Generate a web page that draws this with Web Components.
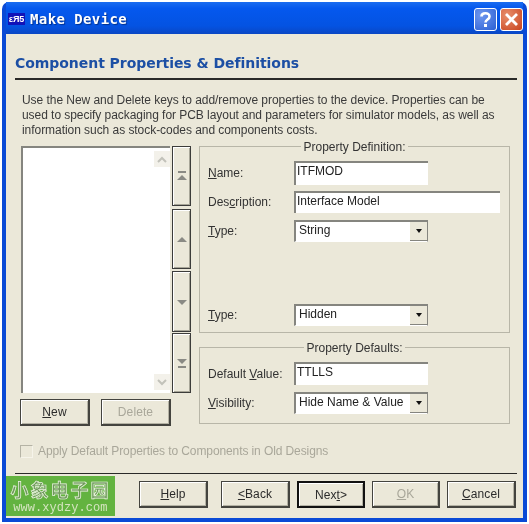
<!DOCTYPE html>
<html>
<head>
<meta charset="utf-8">
<title>Make Device</title>
<style>
	html, body { margin: 0; background: #fff; }
	body { font: 12px "Liberation Sans", Arial, sans-serif; color: #333; }
	u { text-decoration: underline; }
</style>
</head>
<body>

<xp-window heading="Make Device">
	<page-heading>Component Properties &amp; Definitions</page-heading>
	<intro-text>Use the New and Delete keys to add/remove properties to the device. Properties can be used to specify packaging for PCB layout and parameters for simulator models, as well as information such as stock-codes and components costs.</intro-text>

	<main-area>
		<property-list slot="left"></property-list>
		<group-box slot="right" legend="Property Definition:" style="height:187px">
			<form-row style="margin-top:14px"><span slot="label"><u>N</u>ame:</span><text-field value="ITFMOD" style="width:134px;height:24px"></text-field></form-row>
			<form-row style="margin-top:6px"><span slot="label">Des<u>c</u>ription:</span><text-field value="Interface Model" style="width:206px;height:22px"></text-field></form-row>
			<form-row style="margin-top:7px"><span slot="label"><u>T</u>ype:</span><drop-list value="String"></drop-list></form-row>
			<form-row style="margin-top:62px"><span slot="label"><u>T</u>ype:</span><drop-list value="Hidden"></drop-list></form-row>
		</group-box>
		<group-box slot="right" legend="Property Defaults:" style="height:77px;margin-top:14px">
			<form-row style="margin-top:14px"><span slot="label">Default <u>V</u>alue:</span><text-field value="TTLLS" style="width:134px;height:23px"></text-field></form-row>
			<form-row style="margin-top:7px"><span slot="label"><u>V</u>isibility:</span><drop-list value="Hide Name &amp; Value"></drop-list></form-row>
		</group-box>
	</main-area>

	<check-line>Apply Default Properties to Components in Old Designs</check-line>

	<wizard-footer>
		<xp-button style="width:69px;margin-left:24px"><u>H</u>elp</xp-button>
		<xp-button style="width:69px;margin-left:13px"><u>&lt;</u>Back</xp-button>
		<xp-button primary style="width:68px;margin-left:7px">Nex<u>t</u>&gt;</xp-button>
		<xp-button disabled style="width:68px;margin-left:7px"><u>O</u>K</xp-button>
		<xp-button style="width:69px;margin-left:7px"><u>C</u>ancel</xp-button>
	</wizard-footer>
</xp-window>

<script>
	// Small helper: every element below only needs a template string
	class BaseElement extends HTMLElement {
		constructor() {
			super();
			this.attachShadow({ mode: "open" });
		}
		connectedCallback() {
			this.shadowRoot.innerHTML = this.render();
		}
	}

	const upChevron = `<path d="M1 7 L6 2 L11 7 Z" fill="#8a8a84"/>`;
	const downChevron = `<path d="M1 2 L6 7 L11 2 Z" fill="#8a8a84"/>`;

	class XpWindow extends BaseElement {
		render() {
			return `
			<style>
				:host { display: block; width: 525px; height: 520px; margin: 2px; }
				.frame {
					height: 100%; box-sizing: border-box; display: flex; flex-direction: column;
					background: #0a4ad6; border-radius: 7px 7px 0 0;
					padding: 0 4px 4px; filter: blur(.55px);
				}
				.bar {
					height: 32px; flex: none; display: flex; align-items: center;
					background: linear-gradient(#1a6cf0, #0558ee 20%, #0453e2 75%, #0a47c4);
				}
				.logo {
					width: 17px; height: 12px; margin: 2px 0 0 2px; background: #1212b8; color: #fff;
					font: bold 9px/12px "Liberation Sans", sans-serif; text-align: center; overflow: hidden;
				}
				.title {
					margin: 1px 0 0 5px; color: #fff; letter-spacing: .4px;
					font: bold 14px "DejaVu Sans Mono", monospace; text-shadow: 1px 1px 1px #02308c;
				}
				.caps { margin-left: auto; display: flex; gap: 3px; padding-top: 3px; }
				.cap {
					width: 23px; height: 23px; box-sizing: border-box; border: 1px solid #fff; border-radius: 3px;
					display: block;
				}
				.help { background: radial-gradient(circle at 30% 30%, #6f97ee, #2a5fd4); }
				.close { background: radial-gradient(circle at 30% 30%, #e88f6c, #c8431e); }
				.client { flex: 1; min-height: 0; background: #ebe8d9; display: flex; flex-direction: column; }
			</style>
			<div class="frame">
				<div class="bar">
					<div class="logo">&#949;&#1071;5</div>
					<div class="title">${this.getAttribute("heading")}</div>
					<div class="caps">
						<svg class="cap help" viewBox="0 0 21 21"><path d="M6.5 7.5 C6.5 3.5 14.5 3 14.5 7.5 C14.5 10.5 10.5 10.5 10.5 13.5" fill="none" stroke="#fff" stroke-width="2.6"/><rect x="9" y="15" width="3" height="3" fill="#fff"/></svg>
						<svg class="cap close" viewBox="0 0 21 21"><path d="M5 5 L16 16 M16 5 L5 16" stroke="#fff" stroke-width="2.8"/></svg>
					</div>
				</div>
				<div class="client"><slot></slot></div>
			</div>`;
		}
	}

	class PageHeading extends BaseElement {
		render() {
			return `
			<style>
				:host {
					display: block; margin: 20px 6px 0 9px; height: 24px;
					border-bottom: 2px solid #2a2a28; color: #1c4fa4;
					font: bold 14px/19px "DejaVu Sans", sans-serif; letter-spacing: -.05px;
				}
			</style><slot></slot>`;
		}
	}

	class IntroText extends BaseElement {
		render() {
			return `
			<style>
				:host {
					display: block; margin: 13px 20px 0 16px; height: 53px;
					font: 12px/15px "Liberation Sans", sans-serif; color: #3a3a3a; letter-spacing: -.05px;
				}
			</style><slot></slot>`;
		}
	}

	class MainArea extends BaseElement {
		render() {
			return `
			<style>
				:host { display: flex; margin: 0 0 0 14px; height: 280px; }
				.left { width: 179px; flex: none; }
				.right { width: 311px; flex: none; }
			</style>
			<div class="left"><slot name="left"></slot></div>
			<div class="right"><slot name="right"></slot></div>`;
		}
	}

	class PropertyList extends BaseElement {
		render() {
			const arrow = (paths, h, gap) => `<div class="move" style="height:${h}px;margin-bottom:${gap}px"><svg width="12" height="14" viewBox="0 0 12 14">${paths}</svg></div>`;
			return `
			<style>
				:host { display: block; width: 171px; }
				.top { display: flex; gap: 2px; height: 247px; }
				.list {
					width: 149px; box-sizing: border-box; background: #fff; margin-left: 1px;
					border-top: 2px solid #85857f; border-left: 2px solid #85857f;
					display: flex; flex-direction: column; justify-content: space-between;
					align-items: flex-end; padding: 3px 0 3px;
				}
				.sb {
					width: 16px; height: 16px; background: #f3f1ea; display: flex;
					align-items: center; justify-content: center;
				}
				.moves { width: 19px; display: flex; flex-direction: column; }
				.move {
					box-sizing: border-box; background: #ebe8d9;
					border: 1px solid #3c3c3a; box-shadow: inset 1px 1px 0 #fff, inset -1px -1px 0 #a8a698;
					display: flex; align-items: center; justify-content: center;
				}
				.btns { display: flex; margin-top: 6px; gap: 11px; }
				xp-button { width: 70px; }
			</style>
			<div class="top">
				<div class="list">
					<div class="sb"><svg width="12" height="9" viewBox="0 0 12 9"><path d="M2 7 L6 3 L10 7" fill="none" stroke="#c2c2ba" stroke-width="2"/></svg></div>
					<div class="sb"><svg width="12" height="9" viewBox="0 0 12 9"><path d="M2 2 L6 6 L10 2" fill="none" stroke="#c2c2ba" stroke-width="2"/></svg></div>
				</div>
				<div class="moves">
					${arrow(`<rect x="2" y="2" width="8" height="2" fill="#8a8a84"/><g transform="translate(0 4)">${upChevron}</g>`, 60, 3)}
					${arrow(`<g transform="translate(0 3)">${upChevron}</g>`, 60, 2)}
					${arrow(`<g transform="translate(0 3)">${downChevron}</g>`, 61, 1)}
					${arrow(`<g transform="translate(0 1)">${downChevron}</g><rect x="2" y="10" width="8" height="2" fill="#8a8a84"/>`, 60, 0)}
				</div>
			</div>
			<div class="btns">
				<xp-button><u>N</u>ew</xp-button>
				<xp-button disabled>Delete</xp-button>
			</div>`;
		}
	}

	class GroupBox extends BaseElement {
		render() {
			return `
			<style>
				:host { display: block; box-sizing: border-box; border: 1px solid #b8b6a8; position: relative; padding: 0 0 0 8px; }
				.legend {
					position: absolute; top: -7px; left: 0; right: 0; text-align: center;
					font: 12px/14px "Liberation Sans", sans-serif; color: #333;
				}
				.legend span { background: #ebe8d9; padding: 0 2px; }
			</style>
			<div class="legend"><span>${this.getAttribute("legend")}</span></div>
			<slot></slot>`;
		}
	}

	class FormRow extends BaseElement {
		render() {
			return `
			<style>
				:host { display: flex; align-items: center; }
				.label { width: 86px; flex: none; font: 12px "Liberation Sans", sans-serif; color: #333; white-space: nowrap; }
			</style>
			<div class="label"><slot name="label"></slot></div>
			<slot></slot>`;
		}
	}

	class TextField extends BaseElement {
		render() {
			return `
			<style>
				:host {
					display: block; box-sizing: border-box; background: #fff;
					border-top: 2px solid #85857f; border-left: 2px solid #85857f;
					padding-left: 1px; font: 12px/16px "Liberation Sans", sans-serif; color: #222;
				}
			</style>${this.getAttribute("value")}`;
		}
	}

	class DropList extends BaseElement {
		render() {
			return `
			<style>
				:host {
					display: flex; width: 134px; height: 22px; box-sizing: border-box; background: #fff;
					border: 1px solid #85857f; border-bottom-color: #fff; border-right-color: #85857f;
					border-left-width: 2px; border-top-width: 2px;
					font: 12px/16px "Liberation Sans", sans-serif; color: #222;
				}
				.val { flex: 1; padding-left: 3px; white-space: nowrap; overflow: hidden; }
				.arrow {
					width: 17px; height: 19px; background: #ebe8d9; border-bottom: 1px solid #85857f;
					display: flex; align-items: center; justify-content: center; box-sizing: border-box;
				}
				.arrow::after {
					content: ""; border: 3.5px solid transparent; border-top: 4px solid #111; border-bottom: 0;
				}
			</style>
			<div class="val">${this.getAttribute("value")}</div>
			<div class="arrow"></div>`;
		}
	}

	class XpButton extends BaseElement {
		render() {
			const primary = this.hasAttribute("primary");
			const disabled = this.hasAttribute("disabled");
			return `
			<style>
				:host {
					display: flex; align-items: center; justify-content: center; box-sizing: border-box;
					height: 27px; background: #ebe8d9; font: 12px "Liberation Sans", sans-serif;
					color: ${disabled ? "#a9a79a" : "#2b2b2b"}; letter-spacing: .1px;
					border: ${primary ? "2px solid #111" : "1px solid #44443f"};
					border-bottom-width: 2px; border-right-width: 2px;
					box-shadow: inset 1px 1px 0 #fff, inset -1px -1px 0 #b4b2a4;
				}
			</style><slot></slot>`;
		}
	}

	class CheckLine extends BaseElement {
		render() {
			return `
			<style>
				:host {
					display: flex; align-items: center; gap: 5px; margin: 18px 0 0 14px; height: 14px;
					font: 12px "Liberation Sans", sans-serif; color: #a9a79a; letter-spacing: -.1px;
				}
				.box { width: 13px; height: 13px; box-sizing: border-box; border: 1px solid #b5b3a5; border-right-color: #f6f4ea; border-bottom-color: #f6f4ea; }
			</style>
			<div class="box"></div><slot></slot>`;
		}
	}

	class WizardFooter extends BaseElement {
		render() {
			return `
			<style>
				:host { display: block; flex: 1; min-height: 0; margin-top: 15px; }
				.rule { height: 1px; background: #2a2a28; margin: 0 6px 0 9px; }
				.row { display: flex; align-items: flex-start; }
				.mark {
					width: 109px; height: 40px; flex: none; margin-top: 2px; background: #63b340; text-align: center; overflow: hidden;
				}
				.cn {
					font: bold 18px/26px "Noto Sans CJK SC", sans-serif; letter-spacing: 2px;
					color: #6f9a5c; -webkit-text-stroke: .7px #eef4e4; height: 26px;
				}
				.url { font: 12px/12px "Liberation Mono", monospace; color: #d5e4c0; letter-spacing: .05px; }
				.btns { display: flex; padding-top: 7px; }
			</style>
			<div class="rule"></div>
			<div class="row">
				<div class="mark"><div class="cn">小象电子园</div><div class="url">www.xydzy.com</div></div>
				<div class="btns"><slot></slot></div>
			</div>`;
		}
	}

	customElements.define("xp-window", XpWindow);
	customElements.define("page-heading", PageHeading);
	customElements.define("intro-text", IntroText);
	customElements.define("main-area", MainArea);
	customElements.define("property-list", PropertyList);
	customElements.define("group-box", GroupBox);
	customElements.define("form-row", FormRow);
	customElements.define("text-field", TextField);
	customElements.define("drop-list", DropList);
	customElements.define("xp-button", XpButton);
	customElements.define("check-line", CheckLine);
	customElements.define("wizard-footer", WizardFooter);
</script>
</body>
</html>
